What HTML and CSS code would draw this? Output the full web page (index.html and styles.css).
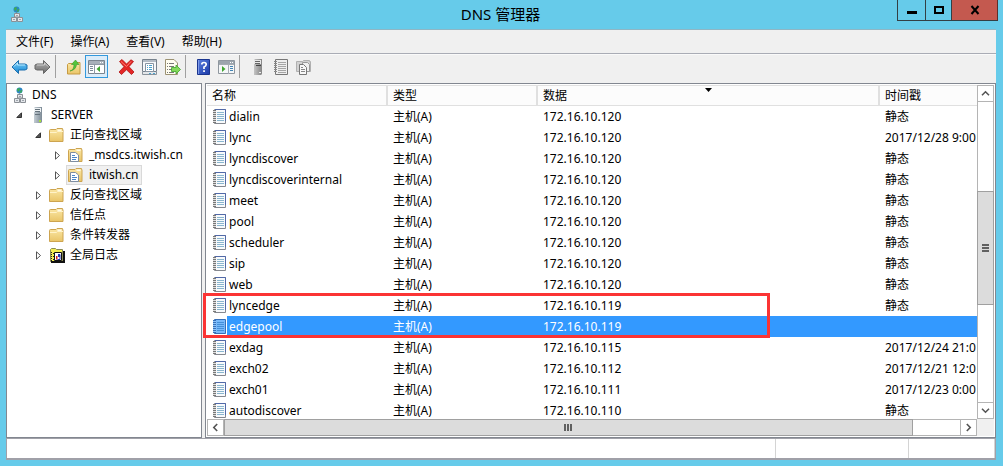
FILE: index.html
```html
<!DOCTYPE html>
<html lang="zh-CN">
<head>
<meta charset="utf-8">
<title>DNS 管理器</title>
<link rel="stylesheet" href="styles.css">
</head>
<body>
<svg class="defs" aria-hidden="true">
  <defs>
    <linearGradient id="g-folder" x1="0" y1="0" x2="0" y2="1"><stop offset="0" stop-color="#fbe7a6"/><stop offset="1" stop-color="#e9c568"/></linearGradient>
    <linearGradient id="g-server" x1="0" y1="0" x2="1" y2="0"><stop offset="0" stop-color="#c3ccd3"/><stop offset="1" stop-color="#7d8b96"/></linearGradient>
    <linearGradient id="g-server-gray" x1="0" y1="0" x2="1" y2="0"><stop offset="0" stop-color="#c4c4c4"/><stop offset="1" stop-color="#858585"/></linearGradient>
    <linearGradient id="g-blue" x1="0" y1="0" x2="0" y2="1"><stop offset="0" stop-color="#7fd3fa"/><stop offset="1" stop-color="#1384d2"/></linearGradient>
    <linearGradient id="g-gray" x1="0" y1="0" x2="0" y2="1"><stop offset="0" stop-color="#b0b0b0"/><stop offset="1" stop-color="#6d6d6d"/></linearGradient>
    <linearGradient id="g-help" x1="0" y1="0" x2="1" y2="1"><stop offset="0" stop-color="#5a7fe0"/><stop offset="1" stop-color="#1c3aa8"/></linearGradient>
  </defs>
  <symbol id="i-dns" viewBox="0 0 12 16">
    <circle cx="5.500" cy="3.500" r="3" fill="#2b86c4"/>
    <path d="M3 2.500Q4 .8 6 1.500L5.500 3.500 4 5zM6.500 3.500L8.300 3 7.500 5.500 6 6z" fill="#3fae4c"/>
    <path d="M5.500 6.500v1" stroke="#777"/>
    <path d="M3.500 7.500h5v3.500h-5zM.5 11.500h5v4h-5zM6.500 11.500h5v4h-5z" fill="#e3e6ea" stroke="#8b9096"/>
    <path d="M5 9.500h2M2 13.500h2M8 13.500h2" stroke="#9da3aa"/>
  </symbol>
  <symbol id="i-server" viewBox="0 0 10 16">
    <path d="M1 1L2 0h7v15l-1 1H1z" fill="url(#g-server)"/>
    <path d="M1 1h7v4H1z" fill="#eef2f4"/>
    <path d="M2 2.500h5M2 4.500h5M2 7.500h5" stroke="#65727c"/>
    <path d="M6 13h2v2H6z" fill="#a4e03c"/>
  </symbol>
  <symbol id="i-server-gray" viewBox="0 0 10 16">
    <path d="M1 1L2 0h7v15l-1 1H1z" fill="url(#g-server-gray)"/>
    <path d="M1 1h7v4H1z" fill="#e8e8e8"/>
    <path d="M2 2.500h5M2 4.500h5" stroke="#666"/><path d="M3 6.500h5" stroke="#444"/>
    <path d="M6 13h2v1H6z" fill="#eee"/>
  </symbol>
  <symbol id="i-folder" viewBox="0 0 15 14">
    <path d="M.5 2.500Q.5 1.500 1.500 1.500H7l1-1h5.500v1h.5v12H.5z" fill="url(#g-folder)" stroke="#cda450"/>
    <path d="M8.500 1.500h4v1.500h-4z" fill="#fffbe8"/>
    <path d="M1 4.500h6.500l1-1H14" stroke="#fff3c9" fill="none"/>
  </symbol>
  <symbol id="i-zone" viewBox="0 0 15 14">
    <path d="M.5 2.500Q.5 1.500 1.500 1.500H7l1-1h5.500v1h.5v12H.5z" fill="url(#g-folder)" stroke="#cda450"/>
    <path d="M8.500 1.500h4v1.500h-4z" fill="#fffbe8"/>
    <path d="M2.500 4.500h5l3 2.500v6.500h-8z" fill="#fff" stroke="#7e8ea3"/>
    <path d="M4 7.500h3M4 9.500h5M4 11.500h4" stroke="#4a86c8"/>
  </symbol>
  <symbol id="i-log" viewBox="0 0 16 16">
    <path d="M1.500 2.500l1-1h4l1 1h6v12h-12z" fill="#f4ef52" stroke="#8a8a55"/>
    <path d="M15 4v11H2" stroke="#111" fill="none" stroke-width="2"/>
    <path d="M2.500 5v9M4 6.500h2M4 9.500h2M4 12.500h2" stroke="#222" stroke-dasharray="1 1"/>
    <path d="M5.500 5.500h7v8h-7z" fill="#fff" stroke="#111"/>
    <path d="M9 7h2v3H9z" fill="#2438b8"/><path d="M7 9h1.500v3.500H7z" fill="#d02020"/>
    <path d="M8.500 12.500h2.500v-5" stroke="#2438b8" fill="none"/>
  </symbol>
  <symbol id="i-record" viewBox="0 0 14 15">
    <path d="M2.500.5h11v14h-11z" fill="#f8fafc" stroke="#85888f"/>
    <path d="M3 .5h10.500V12" fill="none" stroke="#5169a8"/>
    <path d="M5 3.500h7M5 5.500h7M5 7.500h7M5 9.500h7M5 11.500h7" stroke="#8ab6ce"/>
    <path d="M1 1.500h3M1 3.500h3M1 5.500h3M1 7.500h3M1 9.500h3M1 11.500h3M1 13.500h3" stroke="#777"/>
    <path d="M1 2.500h3M1 4.500h3M1 6.500h3M1 8.500h3M1 10.500h3M1 12.500h3" stroke="#dedede"/>
  </symbol>
  <symbol id="i-record-selected" viewBox="0 0 14 15">
    <path d="M2.500.5h11v14h-11z" fill="#78b9fb" stroke="#376fb8"/>
    <path d="M5 3.500h7M5 5.500h7M5 7.500h7M5 9.500h7M5 11.500h7" stroke="#438fd8"/>
    <path d="M1 1.500h3M1 3.500h3M1 5.500h3M1 7.500h3M1 9.500h3M1 11.500h3M1 13.500h3" stroke="#376fb8"/>
    <path d="M1 2.500h3M1 4.500h3M1 6.500h3M1 8.500h3M1 10.500h3M1 12.500h3" stroke="#8cc4fb"/>
  </symbol>
  <symbol id="i-back" viewBox="0 0 17 16"><path d="M1 8l6.500-6.500V5H14l2 1v4l-2 1H7.500v3.500z" fill="url(#g-blue)" stroke="#1d6fae"/><path d="M3 7.500l3.500-3.500v2H14" stroke="#b8e9ff" fill="none"/></symbol>
  <symbol id="i-forward" viewBox="0 0 17 16"><path d="M16 8L9.500 1.500V5H3L1 6v4l2 1h6.500v3.500z" fill="url(#g-gray)" stroke="#666"/><path d="M3 6h7.500V4l3.500 3.500" stroke="#ccc" fill="none"/></symbol>
  <symbol id="i-up" viewBox="0 0 16 16"><path d="M1.500 5.500l1-1h4l1-1h6.500v11.500H1.500z" fill="url(#g-folder)" stroke="#c69a43"/><path d="M4 12Q8 11 8 5.500H5.500L9.500 1l3.500 4.500h-2.500Q10 11 4 12z" fill="#55c53c" stroke="#3a9928" stroke-width=".6"/></symbol>
  <symbol id="i-tree" viewBox="0 0 17 14"><path d="M.5.5h16v13H.5z" fill="#fff" stroke="#7b8590"/><path d="M1 1h15v3H1z" fill="#a8b0b9"/><path d="M12 2.500h1M14 2.500h1" stroke="#fff"/><path d="M1 4.500h15M6.500 5v9" stroke="#8f99a3"/><path d="M2 6.500h3M2 8.500h3M2 10.500h3" stroke="#7b8a98"/><path d="M12 6v6L8.500 9z" fill="#40a631"/></symbol>
  <symbol id="i-delete" viewBox="0 0 17 16"><path d="M1.500 2.500l2.500-2 4.500 4.500L13 .8l2.500 1.700-4.500 5.200 5 5.300-2.500 2.500-5-4.700-5 4.700L1 13l5-5.300z" fill="#e32626" stroke="#b31414" stroke-width=".8"/><path d="M3 2.500l5.500 5 4.500-5" stroke="#ff7a70" fill="none"/></symbol>
  <symbol id="i-props" viewBox="0 0 15 16"><path d="M.5.5h14v12H.5z" fill="#f6f8fa" stroke="#77828d"/><path d="M1 1h13v2H1z" fill="#b4bcc5"/><path d="M3.500 4.500h8v8h-8z" fill="#fff" stroke="#8995a2"/><path d="M5 6.500h1M7 6.500h3M5 8.500h1M7 8.500h3M5 10.500h1M7 10.500h3" stroke="#4ba2cc"/><path d="M.5 13v2.500h14V13" fill="#e4e7ea" stroke="#8a939b"/><path d="M7 14.500h2M11 14.500h2" stroke="#4ba2cc"/></symbol>
  <symbol id="i-export" viewBox="0 0 16 16"><path d="M.5.5H9L12.500 4v11.500H.5z" fill="#fffdf0" stroke="#9c9273"/><path d="M2 4.500h1M4 4.500h5M2 7.500h1M4 7.500h5M2 10.500h1M4 10.500h3M2 13.500h1M4 13.500h5" stroke="#777"/><path d="M6.500 8.500H11V6l4.500 4.500L11 15v-2.500H6.500z" fill="#83d95a" stroke="#40a52b" stroke-width=".8"/></symbol>
  <symbol id="i-help" viewBox="0 0 13 16"><path d="M.5.5h12v15H.5z" fill="url(#g-help)" stroke="#1b358f"/><path d="M1.500 1v14" stroke="#7f9ae6"/><path d="M4.800 5.500Q4.800 3.500 7 3.500t2.200 2Q9.200 7 7 8v2" fill="none" stroke="#fff" stroke-width="1.700"/><path d="M6.200 11.200h1.700v1.700H6.200z" fill="#fff"/></symbol>
  <symbol id="i-pane" viewBox="0 0 17 14"><path d="M.5.5h16v13H.5z" fill="#f5f7f8" stroke="#8f979f"/><path d="M1 1h15v3H1z" fill="#9ca5ad"/><path d="M12 2.500h1M14 2.500h1" stroke="#fff"/><path d="M1 4.500h15M10.500 5v9" stroke="#a5acb3"/><path d="M4 6v6l3.500-3z" fill="#40a631"/><path d="M12 6.500h3M12 8.500h3M12 10.500h3" stroke="#4284b4"/></symbol>
  <symbol id="i-book" viewBox="0 0 15 16"><path d="M2.500.5h12v15h-12z" fill="#eee" stroke="#777"/><path d="M5 3.500h8M5 5.500h8M5 7.500h8M5 9.500h8M5 11.500h8M5 13.500h8" stroke="#a5a5a5"/><path d="M1 2.500h3M1 4.500h3M1 6.500h3M1 8.500h3M1 10.500h3M1 12.500h3" stroke="#888"/></symbol>
  <symbol id="i-copyzone" viewBox="0 0 15 16"><path d="M.5 2.500h6l1-1h6v1h1v10H.5z" fill="#d2d2d2" stroke="#b0b0b0"/><path d="M6.500 3.500h5l2 2v7h-7z" fill="#f0f0f0" stroke="#999"/><path d="M3.500 5.500h4l3 3v7h-7z" fill="#f8f8f8" stroke="#777"/><path d="M5 8.500h2M5 10.500h4M5 12.500h4" stroke="#888"/></symbol>
  <symbol id="i-open" viewBox="0 0 7 7"><path d="M5.500.8v4.700H.8z" fill="#555" stroke="#333"/></symbol>
  <symbol id="i-closed" viewBox="0 0 7 9"><path d="M1.500.8v7.400l4-3.700z" fill="#fff" stroke="#555"/></symbol>
  <symbol id="i-chevron" viewBox="0 0 9 9"><path d="M1 6.200l3.500-3.400L8 6.200" fill="none" stroke="#555" stroke-width="1.600"/></symbol>
</svg>

<div class="window">
  <header class="titlebar">
    <svg class="app-icon" width="12" height="16"><use href="#i-dns"/></svg>
    <h1 class="title">DNS 管理器</h1>
    <div class="controls">
      <button class="control" aria-label="最小化"><svg width="12" height="10"><path d="M1 7.500h10" stroke="#000" stroke-width="3"/></svg></button>
      <button class="control control-max" aria-label="最大化"><svg width="10" height="10"><path d="M1 2h8v6H1z" fill="none" stroke="#000" stroke-width="2"/></svg></button>
      <button class="control control-close" aria-label="关闭"><svg width="10" height="10"><path d="M1.500 1l7 8M8.500 1l-7 8" stroke="#000" stroke-width="2"/></svg></button>
    </div>
  </header>

  <nav class="menubar" aria-label="菜单">
    <button class="menu">文件(F)</button>
    <button class="menu">操作(A)</button>
    <button class="menu">查看(V)</button>
    <button class="menu">帮助(H)</button>
  </nav>

  <div class="toolbar" role="toolbar" aria-label="工具栏">
    <div class="tools">
      <button class="tool" aria-label="后退"><svg width="17" height="16"><use href="#i-back"/></svg></button>
      <button class="tool" aria-label="前进"><svg width="17" height="16"><use href="#i-forward"/></svg></button>
    </div>
    <div class="tools">
      <button class="tool" aria-label="上一级"><svg width="16" height="16"><use href="#i-up"/></svg></button>
      <button class="tool tool-active" aria-label="显示控制台树"><svg width="17" height="14"><use href="#i-tree"/></svg></button>
    </div>
    <div class="tools">
      <button class="tool" aria-label="删除"><svg width="17" height="16"><use href="#i-delete"/></svg></button>
      <button class="tool" aria-label="属性"><svg width="15" height="16"><use href="#i-props"/></svg></button>
      <button class="tool" aria-label="导出列表"><svg width="16" height="16"><use href="#i-export"/></svg></button>
    </div>
    <div class="tools">
      <button class="tool" aria-label="帮助"><svg width="13" height="16"><use href="#i-help"/></svg></button>
      <button class="tool" aria-label="操作窗格"><svg width="17" height="14"><use href="#i-pane"/></svg></button>
    </div>
    <div class="tools">
      <button class="tool" aria-label="服务器"><svg width="10" height="16"><use href="#i-server-gray"/></svg></button>
      <button class="tool" aria-label="记录"><svg width="15" height="16"><use href="#i-book"/></svg></button>
      <button class="tool" aria-label="新建区域"><svg width="15" height="16"><use href="#i-copyzone"/></svg></button>
    </div>
  </div>

  <main class="content">
    <ul class="tree" role="tree">
      <li class="node root" role="treeitem"><svg width="12" height="16"><use href="#i-dns"/></svg><span class="name">DNS</span></li>
      <li class="node level-1" role="treeitem"><span class="arrow"><svg width="7" height="7"><use href="#i-open"/></svg></span><span class="pic"><svg width="10" height="16"><use href="#i-server"/></svg></span><span class="name">SERVER</span></li>
      <li class="node level-2" role="treeitem"><span class="arrow"><svg width="7" height="7"><use href="#i-open"/></svg></span><span class="pic"><svg width="15" height="14"><use href="#i-folder"/></svg></span><span class="name">正向查找区域</span></li>
      <li class="node level-3" role="treeitem"><span class="arrow"><svg width="7" height="9"><use href="#i-closed"/></svg></span><span class="pic"><svg width="15" height="14"><use href="#i-zone"/></svg></span><span class="name">_msdcs.itwish.cn</span></li>
      <li class="node level-3" role="treeitem" aria-selected="true"><span class="arrow"><svg width="7" height="9"><use href="#i-closed"/></svg></span><span class="chosen"><span class="pic"><svg width="15" height="14"><use href="#i-zone"/></svg></span><span class="name">itwish.cn</span></span></li>
      <li class="node level-2" role="treeitem"><span class="arrow"><svg width="7" height="9"><use href="#i-closed"/></svg></span><span class="pic"><svg width="15" height="14"><use href="#i-folder"/></svg></span><span class="name">反向查找区域</span></li>
      <li class="node level-2" role="treeitem"><span class="arrow"><svg width="7" height="9"><use href="#i-closed"/></svg></span><span class="pic"><svg width="15" height="14"><use href="#i-folder"/></svg></span><span class="name">信任点</span></li>
      <li class="node level-2" role="treeitem"><span class="arrow"><svg width="7" height="9"><use href="#i-closed"/></svg></span><span class="pic"><svg width="15" height="14"><use href="#i-folder"/></svg></span><span class="name">条件转发器</span></li>
      <li class="node level-2" role="treeitem"><span class="arrow"><svg width="7" height="9"><use href="#i-closed"/></svg></span><span class="pic"><svg width="16" height="16"><use href="#i-log"/></svg></span><span class="name">全局日志</span></li>
    </ul>

    <section class="list">
      <div class="view">
        <table class="records">
          <colgroup><col class="col-name"><col class="col-type"><col class="col-data"><col></colgroup>
          <thead><tr><th>名称</th><th>类型</th><th><div class="sorted">数据<svg width="7" height="4"><path d="M0 0h7L3.500 4z"/></svg></div></th><th>时间戳</th></tr></thead>
          <tbody>
            <tr><td><div class="entry"><svg width="14" height="15"><use href="#i-record"/></svg><span>dialin</span></div></td><td>主机(A)</td><td>172.16.10.120</td><td>静态</td></tr>
            <tr><td><div class="entry"><svg width="14" height="15"><use href="#i-record"/></svg><span>lync</span></div></td><td>主机(A)</td><td>172.16.10.120</td><td>2017/12/28 9:00</td></tr>
            <tr><td><div class="entry"><svg width="14" height="15"><use href="#i-record"/></svg><span>lyncdiscover</span></div></td><td>主机(A)</td><td>172.16.10.120</td><td>静态</td></tr>
            <tr><td><div class="entry"><svg width="14" height="15"><use href="#i-record"/></svg><span>lyncdiscoverinternal</span></div></td><td>主机(A)</td><td>172.16.10.120</td><td>静态</td></tr>
            <tr><td><div class="entry"><svg width="14" height="15"><use href="#i-record"/></svg><span>meet</span></div></td><td>主机(A)</td><td>172.16.10.120</td><td>静态</td></tr>
            <tr><td><div class="entry"><svg width="14" height="15"><use href="#i-record"/></svg><span>pool</span></div></td><td>主机(A)</td><td>172.16.10.120</td><td>静态</td></tr>
            <tr><td><div class="entry"><svg width="14" height="15"><use href="#i-record"/></svg><span>scheduler</span></div></td><td>主机(A)</td><td>172.16.10.120</td><td>静态</td></tr>
            <tr><td><div class="entry"><svg width="14" height="15"><use href="#i-record"/></svg><span>sip</span></div></td><td>主机(A)</td><td>172.16.10.120</td><td>静态</td></tr>
            <tr><td><div class="entry"><svg width="14" height="15"><use href="#i-record"/></svg><span>web</span></div></td><td>主机(A)</td><td>172.16.10.120</td><td>静态</td></tr>
            <tr><td><div class="entry"><svg width="14" height="15"><use href="#i-record"/></svg><span>lyncedge</span></div></td><td>主机(A)</td><td>172.16.10.119</td><td>静态</td></tr>
            <tr class="selected"><td><div class="entry"><svg width="14" height="15"><use href="#i-record-selected"/></svg><span>edgepool</span></div></td><td>主机(A)</td><td>172.16.10.119</td><td></td></tr>
            <tr><td><div class="entry"><svg width="14" height="15"><use href="#i-record"/></svg><span>exdag</span></div></td><td>主机(A)</td><td>172.16.10.115</td><td>2017/12/24 21:0</td></tr>
            <tr><td><div class="entry"><svg width="14" height="15"><use href="#i-record"/></svg><span>exch02</span></div></td><td>主机(A)</td><td>172.16.10.112</td><td>2017/12/21 12:0</td></tr>
            <tr><td><div class="entry"><svg width="14" height="15"><use href="#i-record"/></svg><span>exch01</span></div></td><td>主机(A)</td><td>172.16.10.111</td><td>2017/12/23 0:00</td></tr>
            <tr><td><div class="entry"><svg width="14" height="15"><use href="#i-record"/></svg><span>autodiscover</span></div></td><td>主机(A)</td><td>172.16.10.110</td><td>静态</td></tr>
          </tbody>
        </table>
      </div>
      <div class="vbar">
        <button class="step" aria-label="向上滚动"><svg width="9" height="9"><use href="#i-chevron"/></svg></button>
        <div class="vtrack"><div class="vthumb"><svg width="7" height="8"><path d="M0 1h7M0 4h7M0 7h7" stroke="#606060" stroke-width="2"/></svg></div></div>
        <button class="step" aria-label="向下滚动"><svg class="turn-down" width="9" height="9"><use href="#i-chevron"/></svg></button>
      </div>
      <div class="hbar">
        <button class="step" aria-label="向左滚动"><svg class="turn-left" width="9" height="9"><use href="#i-chevron"/></svg></button>
        <div class="htrack"><div class="hthumb"><svg width="8" height="7"><path d="M1 0v7M4 0v7M7 0v7" stroke="#606060" stroke-width="2"/></svg></div></div>
        <button class="step" aria-label="向右滚动"><svg class="turn-right" width="9" height="9"><use href="#i-chevron"/></svg></button>
      </div>
      <div class="corner"></div>
      <div class="callout"></div>
    </section>
  </main>

  <footer class="status"><span class="status-main"></span><span class="status-cell"></span><span class="status-cell status-end"></span></footer>
</div>
</body>
</html>
```
FILE: styles.css
```css
* { box-sizing: border-box; }

body {
  margin: 0;
  font: 12px/20px "Noto Sans", "Noto Sans CJK SC", sans-serif;
  color: #000;
}

button {
  display: flex;
  align-items: center;
  justify-content: center;
  margin: 0;
  padding: 0;
  border: 0;
  background: none;
  font: inherit;
  color: inherit;
}

svg { display: block; flex: none; }
.defs { position: absolute; width: 0; height: 0; }

.window {
  display: flex;
  flex-direction: column;
  height: 100vh;
  padding: 0 7px 6px 6px;
  background: #66cbea;
}

/* Title bar */
.titlebar {
  display: grid;
  grid-template-columns: 1fr auto 1fr;
  flex: none;
  height: 29px;
  margin-right: -2px;
}
.app-icon { margin: 6px 0 0 5px; }
.title { margin: 0; padding-right: 3px; font-size: 15px; font-weight: 400; line-height: 29px; }
.controls { display: flex; justify-self: end; height: 21px; }
.control { width: 28px; border: 1px solid #333f44; border-top: 0; border-right: 0; }
.control-max { width: 26px; }
.control-close { width: 47px; border-right: 1px solid #5c2f2b; background: #c4594f; }

/* Menus and tools */
.menubar {
  display: flex;
  flex: none;
  gap: 17px;
  height: 25px;
  padding: 0 10px;
  border-top: 1px solid #8fb6c4;
  border-bottom: 1px solid #a9acb5;
  background: #f0f0f0;
}
.toolbar {
  display: flex;
  flex: none;
  height: 29px;
  padding: 0 2px 5px;
  border-top: 1px solid #fafafa;
  background: #f0f0f0;
}
.tools { display: flex; padding-right: 1px; border-right: 1px solid #a0a0a0; margin-right: 6px; }
.tools:nth-child(2) { padding: 0; border: 0; margin-right: 7px; }
.tools:last-child { border: 0; }
.tool { width: 23px; }
.tool-active { border: 1px solid #3399dd; background: #dbecf9; }

/* Panes */
.content {
  display: flex;
  flex: 1;
  gap: 3px;
  min-height: 0;
  background: #f0f0f0;
}
.tree {
  flex: none;
  width: 196px;
  margin: 0;
  padding: 1px 0;
  border: 1px solid #828790;
  background: #fff;
  list-style: none;
}
.node { display: flex; align-items: center; height: 20px; }
.root { padding-left: 7px; gap: 6px; }
.level-1 { padding-left: 9px; }
.level-2 { padding-left: 28px; }
.level-3 { padding-left: 47px; }
.arrow { display: flex; flex: none; width: 12px; }
.pic { display: flex; flex: none; justify-content: center; width: 19px; }
.name { white-space: nowrap; }
.level-1 .name, .level-2 .name, .level-3 .name { padding-left: 4px; }
.chosen { display: flex; align-items: center; height: 20px; padding-right: 3px; background: #f0f0f0; box-shadow: inset 0 0 0 1px #d9d9d9; }

.list {
  position: relative;
  display: grid;
  grid-template: minmax(0, 1fr) 17px / minmax(0, 1fr) 17px;
  flex: 1;
  min-width: 0;
  padding: 1px;
  border: 1px solid #828790;
  background: #fff;
}
.view { overflow: hidden; }
.records { width: 100%; table-layout: fixed; border-collapse: separate; border-spacing: 0; }
.col-name { width: 181px; }
.col-type { width: 150px; }
.col-data { width: 342px; }
.records th, .records td {
  height: 21px;
  padding: 0 0 0 5px;
  overflow: hidden;
  font-weight: 400;
  line-height: 19px;
  text-align: left;
  text-overflow: clip;
  white-space: nowrap;
}
.records th { border: solid #e0e0e0; border-width: 1px 2px 1px 0; background: #fcfcfc; }
.records th:last-child { border-right: 0; }
.sorted { display: flex; justify-content: space-between; padding-right: 166px; }
.sorted svg { margin-top: 2px; }
.entry { display: flex; align-items: center; gap: 1px; }
.entry span { flex: 1; padding-left: 2px; line-height: 21px; }
.selected { color: #fff; }
.selected td:not(:first-child), .selected .entry span { background: #3399ff; }

/* Scroll bars */
.vbar, .vtrack { display: flex; flex-direction: column; }
.hbar, .htrack { display: flex; }
.step { flex: none; width: 17px; height: 17px; border: 1px solid #b4b4b4; background: #fff; }
.vtrack { flex: 1; padding-top: 89px; border: solid #b4b4b4; border-width: 0 1px; }
.vthumb { display: flex; align-items: center; justify-content: center; height: 114px; margin: 0 -1px; border: 1px solid #a0a0a0; background: #dcdcdc; }
.htrack { flex: 1; border: solid #b4b4b4; border-width: 1px 0; }
.hthumb { display: flex; align-items: center; justify-content: center; width: 93.6%; margin: -1px 0; border: 1px solid #a0a0a0; background: #dcdcdc; }
.turn-down { transform: rotate(180deg); }
.turn-left { transform: rotate(-90deg); }
.turn-right { transform: rotate(90deg); }
.corner { background: #f0f0f0; }

.callout {
  position: absolute;
  top: 209px;
  left: -3px;
  width: 567px;
  height: 45px;
  border: 3px solid #fb3434;
}

/* Status bar */
.status {
  display: flex;
  flex: none;
  height: 22px;
  border: solid #a0a0a8;
  border-width: 1px 1px 2px;
  background: #fff;
}
.status-main { flex: 1; }
.status-cell { width: 133px; border-left: 1px solid #d4d4d4; }
.status-end { width: 87px; border-right: 1px solid #d4d4d4; }
```
